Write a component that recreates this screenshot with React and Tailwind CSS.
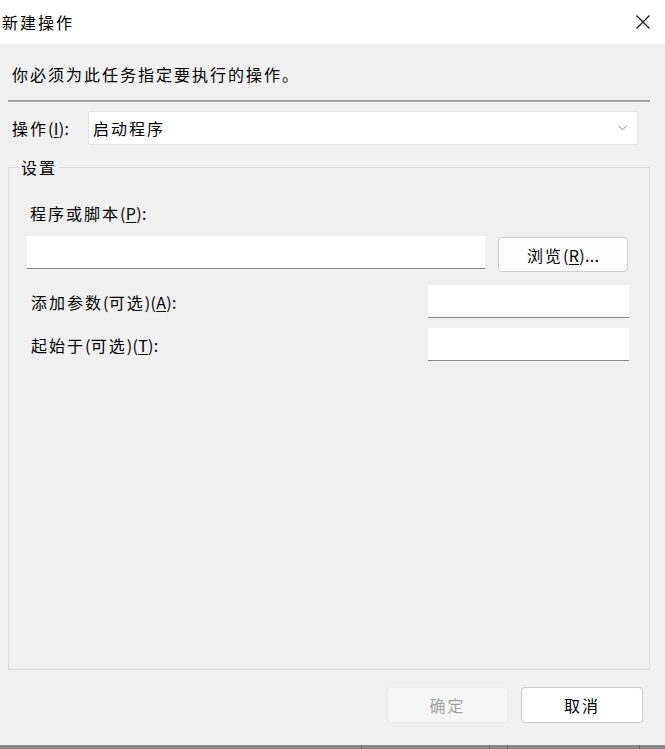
import React from 'react';

const font = { fontFamily: '"Noto Sans CJK SC", "Noto Sans", sans-serif' };

// latin bits of a label keep normal spacing, the CJK glyphs get the wider YaHei pitch
const L = ({ children }) => <span className="tracking-[0.3px]">{children}</span>;

// underlined access key, like Windows dialogs
const Key = ({ children }) => <span className="underline underline-offset-2">{children}</span>;

const TextBox = ({ className }) => (
  <div className={`bg-white border-b border-[#8a8a8a] ${className}`} />
);

export default function App() {
  return (
    <div
      className="w-[665px] h-[749px] flex flex-col overflow-hidden text-[16px] tracking-[2px] text-black"
      style={font}
    >
      {/* title bar */}
      <div className="h-[44px] bg-white flex items-center justify-between shrink-0">
        <span className="pl-[2px]">新建操作</span>
        <svg className="w-[14px] h-[14px] mr-[15px]" viewBox="0 0 14 14" fill="none" stroke="#111" strokeWidth="1.1">
          <path d="M0.5 0.5L13.5 13.5M13.5 0.5L0.5 13.5" />
        </svg>
      </div>

      {/* body */}
      <div className="flex-1 bg-[#f0f0f0] flex flex-col">
        <p className="mt-[18px] pl-[12px] leading-[24px]">你必须为此任务指定要执行的操作。</p>

        <div className="mt-[14px] mx-[8px] mr-[15px]">
          <div className="h-[2px] bg-[#a3a3a3]" />
          <div className="h-[1px] bg-white" />
        </div>

        <div className="mt-[8px] flex items-center pl-[12px] pr-[27px]">
          <span className="w-[76px] leading-[24px]">
            操作<L>(<Key>I</Key>):</L>
          </span>
          <div className="flex-1 h-[34px] bg-white border border-[#e3e3e3] rounded-[2px] flex items-center justify-between pl-[4px] pr-[10px]">
            <span>启动程序</span>
            <svg className="w-[9px] h-[6px]" viewBox="0 0 9 6" fill="none" stroke="#8a8a8a" strokeWidth="1">
              <path d="M0.5 0.8L4.5 4.8L8.5 0.8" />
            </svg>
          </div>
        </div>

        {/* settings group */}
        <div className="relative mt-[22px] mx-[8px] mr-[15px] h-[503px] border border-[#dadada] flex flex-col">
          <span className="absolute -top-[13px] left-[10px] px-[2px] bg-[#f0f0f0] leading-[24px]">设置</span>

          <div className="pl-[21px] pr-[21px]">
            <p className="mt-[33px] leading-[24px]">
              程序或脚本<L>(<Key>P</Key>):</L>
            </p>
            <div className="mt-[11px] flex items-start">
              <TextBox className="w-[459px] h-[33px] ml-[-3px]" />
              <button className="ml-[13px] mt-[1px] w-[130px] h-[35px] rounded-[4px] border border-[#d0d0d0] bg-[#fdfdfd] tracking-[2px]">
                浏览<L>(<Key>R</Key>)...</L>
              </button>
            </div>

            <div className="mt-[13px] flex items-center justify-between">
              <span className="leading-[24px] pl-[1px]">
                添加参数<L>(</L>可选<L>)(<Key>A</Key>):</L>
              </span>
              <TextBox className="w-[201px] h-[33px] mr-[-1px]" />
            </div>

            <div className="mt-[10px] flex items-center justify-between">
              <span className="leading-[24px] pl-[1px]">
                起始于<L>(</L>可选<L>)(<Key>T</Key>):</L>
              </span>
              <TextBox className="w-[201px] h-[33px] mr-[-1px]" />
            </div>
          </div>
        </div>

        {/* dialog buttons */}
        <div className="mt-[17px] flex justify-end gap-[13px] pr-[22px]">
          <button className="w-[121px] h-[36px] rounded-[4px] border border-[#ececec] bg-[#f6f6f6] text-[#a2a2a2] tracking-[2px]">
            确定
          </button>
          <button className="w-[122px] h-[36px] rounded-[4px] border border-[#c8c8c8] bg-white text-black tracking-[2px]">
            取消
          </button>
        </div>
      </div>

      {/* edge of the window behind */}
      <div className="h-[4px] bg-[#8a8a8a] shrink-0 flex">
        <div className="w-[362px] border-r border-[#6a6a6a]" />
        <div className="w-[128px] border-r border-[#6a6a6a]" />
        <div className="w-[18px] border-r border-[#6a6a6a]" />
        <div className="w-[132px] border-r border-[#6a6a6a]" />
      </div>
    </div>
  );
}
